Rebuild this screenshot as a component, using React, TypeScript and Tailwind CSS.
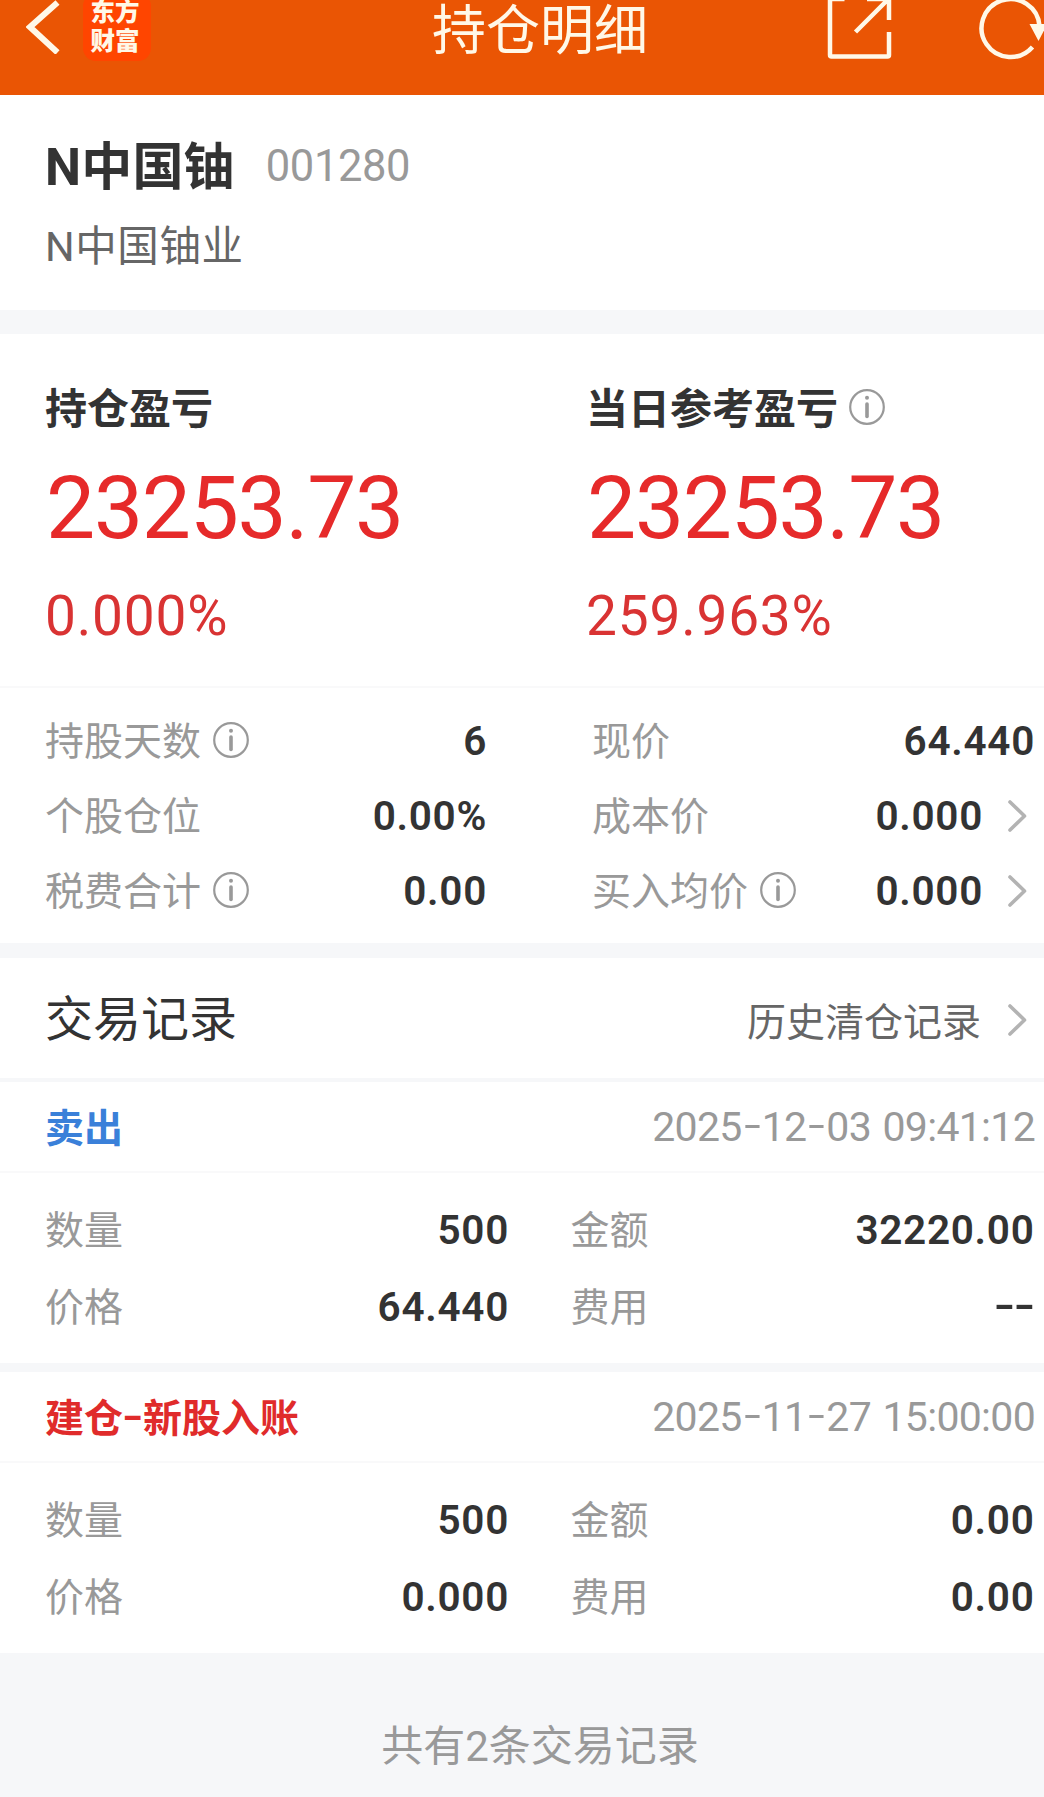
import { Fragment } from "react";
import type { ReactNode } from "react";

export default function App() {
  return (
    <div className="flex h-[1797px] w-[1044px] flex-col overflow-hidden bg-[#f6f7f9] font-['Roboto','Noto_Sans_CJK_SC',sans-serif] text-[39px] leading-none text-[#333333]">
      <Header />
      <section className="h-[215.5px] bg-white pl-[45px] pt-[40.5px]">
        <div className="flex h-[62px] items-center">
          <h2 className="pt-[2px] text-[51px] font-bold tracking-[0.2px]">N中国铀</h2>
          <span className="ml-[31px] pt-px text-[43.5px] tracking-[-0.4px] text-[#999999]">
            001280
          </span>
        </div>
        <p className="mt-[29px] text-[41.5px] leading-[42px] tracking-[0.6px] text-[#666666]">
          N中国铀业
        </p>
      </section>

      <section className="mt-[24px] grid h-[354px] grid-cols-[541px_1fr] border-b-2 border-[#f9f9fa] bg-white pl-[45px]">
        <ProfitBlock label="持仓盈亏" amount="23253.73" percent="0.000%" />
        <ProfitBlock
          label="当日参考盈亏"
          amount="23253.73"
          percent="259.963%"
          info
        />
      </section>

      <section className="grid h-[255px] grid-cols-[442px_443px] content-start gap-x-[105px] bg-white pl-[45px] pt-[16px]">
        {stats.map((stat) => (
          <div key={stat.label} className="flex h-[75px] items-center">
            <span className="pt-[2px] text-[#999999]">{stat.label}</span>
            {stat.info && <InfoIcon className="mb-[3px] ml-[12px]" />}
            <Value>{stat.value}</Value>
            {stat.link && <ChevronRight />}
          </div>
        ))}
      </section>

      <section className="mt-[15px] flex h-[120px] items-center bg-white pl-[45px] pr-[9px]">
        <h3 className="pt-[4px] text-[48px]">交易记录</h3>
        <a className="ml-auto flex items-center pt-[5px] text-[#666666]">
          <span className="pr-[2px] pt-[5px]">历史清仓记录</span>
          <ChevronRight />
        </a>
      </section>

      {trades.map((trade) => (
        <section key={trade.time} className={trade.className}>
          <div className="flex h-[91px] items-center justify-between border-b-2 border-[#f9f9fa] pl-[45px] pr-[9px]">
            <span className={trade.titleClass}>
              <Hyphenated text={trade.title} />
            </span>
            <span className="pt-[2px] text-[41px] tracking-[-0.7px] text-[#999999] [word-spacing:2px]">
              <Hyphenated text={trade.time} />
            </span>
          </div>
          <div className="grid h-[190px] grid-cols-[464px_464px] content-start gap-x-[61.5px] pl-[45px] pt-[19px]">
            {trade.fields.map(([label, value]) => (
              <div key={label} className="flex h-[77px] items-center">
                <span className="pt-[2px] text-[#999999]">{label}</span>
                <Value>
                  <Hyphenated text={value} />
                </Value>
              </div>
            ))}
          </div>
        </section>
      ))}

      <footer className="pl-[36px] pt-[72px] text-center text-[42px] leading-[44px] text-[#999999]">
        共有2条交易记录
      </footer>
    </div>
  );
}

function Header() {
  return (
    <header className="h-[94.5px] shrink-0 overflow-hidden bg-[#ea5504] text-[#fff8e8]">
      <div className="flex h-[54px] items-center pl-[26px]">
        <svg className="h-[54px] w-[34px] shrink-0" viewBox="0 0 34 54" fill="none">
          <path d="M31.5 2.500 4 27l27.500 25.500" stroke="currentColor" strokeWidth="6" />
        </svg>
        <div className="ml-[23px] flex h-[68px] w-[68px] shrink-0 flex-col items-center justify-center rounded-[13px] bg-[#ff4500] pr-1 text-[24.5px] font-black leading-[29px]">
          <span className="leading-[24px]">东方</span>
          <span className="mt-[5px] leading-[24px]">财富</span>
        </div>
        <h1 className="ml-[281px] w-[220px] shrink-0 whitespace-nowrap pt-[10px] text-[54px]">
          持仓明细
        </h1>
        <svg
          className="ml-[175px] h-[66px] w-[66px] shrink-0"
          viewBox="0 0 66 66"
          fill="none"
          stroke="currentColor"
          strokeWidth="4.5"
        >
          <path d="M17.500 5H4.500q-1.500 0-1.500 1.500v54.500q0 1.500 1.500 1.500h56q1.500 0 1.500-1.500V38M40 5h22v21M28.500 38 60 6.500" />
        </svg>
        <svg className="ml-[84px] h-[66px] w-[70px] shrink-0" viewBox="0 0 70 66" fill="none">
          <path
            d="M55.500 53A29 29 0 1 1 62.500 32"
            stroke="currentColor"
            strokeWidth="4.5"
          />
          <path d="M52.500 30h18l-9 17z" fill="currentColor" />
        </svg>
      </div>
    </header>
  );
}

function ProfitBlock({
  label,
  amount,
  percent,
  info,
}: {
  label: string;
  amount: string;
  percent: string;
  info?: boolean;
}) {
  return (
    <div className="pt-[52px]">
      <div className="flex h-[44px] items-center text-[42px] font-bold">
        <span className="pt-[4px]">{label}</span>
        {info && <InfoIcon className="mb-[2px] ml-[11px]" />}
      </div>
      <div className="mt-[33px] pl-px text-[87.5px] leading-[90px] tracking-[-1.3px] text-[#e62a2a]">
        {amount}
      </div>
      <div className="mt-[33px] text-[55px] leading-[60px] tracking-[0.8px] text-[#d93333]">
        {percent}
      </div>
    </div>
  );
}

function Value({ children }: { children: ReactNode }) {
  return (
    <span className="ml-auto text-[40.5px] font-semibold tracking-[0.7px]">
      {children}
    </span>
  );
}

// Roboto's hyphen is short and low, so it is widened and lifted to digit height
function Hyphenated({ text }: { text: string }) {
  return text.split("-").map((part, i) => (
    <Fragment key={i}>
      {i > 0 && (
        <span className="inline-block w-[20px] -translate-y-[2px] scale-x-[1.45] text-center">
          -
        </span>
      )}
      {part}
    </Fragment>
  ));
}

function InfoIcon({ className }: { className: string }) {
  return (
    <svg
      className={`size-[36px] shrink-0 text-[#999999] ${className}`}
      viewBox="0 0 36 36"
      fill="none"
    >
      <circle cx="18" cy="18" r="16.8" stroke="currentColor" strokeWidth="2.2" />
      <circle cx="18" cy="8.800" r="2" fill="currentColor" />
      <path d="M18 15v12.500" stroke="currentColor" strokeWidth="3.6" strokeLinecap="round" />
    </svg>
  );
}

function ChevronRight() {
  return (
    <svg
      className="mb-[2px] ml-[24px] mr-[7px] h-[34px] w-[21px] shrink-0"
      viewBox="0 0 21 34"
      fill="none"
    >
      <path
        d="M3 3l14.500 14L3 31"
        stroke="#b3b3b3"
        strokeWidth="3.6"
        strokeLinecap="round"
        strokeLinejoin="round"
      />
    </svg>
  );
}

const stats = [
  { label: "持股天数", value: "6", info: true },
  { label: "现价", value: "64.440" },
  { label: "个股仓位", value: "0.00%" },
  { label: "成本价", value: "0.000", link: true },
  { label: "税费合计", value: "0.00", info: true },
  { label: "买入均价", value: "0.000", info: true, link: true },
];

const trades = [
  {
    title: "卖出",
    titleClass: "pt-[5px] font-bold text-[#3a80d9]",
    className: "mt-[4px] bg-white",
    time: "2025-12-03 09:41:12",
    fields: [
      ["数量", "500"],
      ["金额", "32220.00"],
      ["价格", "64.440"],
      ["费用", "--"],
    ],
  },
  {
    title: "建仓-新股入账",
    titleClass: "pt-[5px] font-bold text-[#e02b2b]",
    className: "mt-[9px] bg-white",
    time: "2025-11-27 15:00:00",
    fields: [
      ["数量", "500"],
      ["金额", "0.00"],
      ["价格", "0.000"],
      ["费用", "0.00"],
    ],
  },
];
